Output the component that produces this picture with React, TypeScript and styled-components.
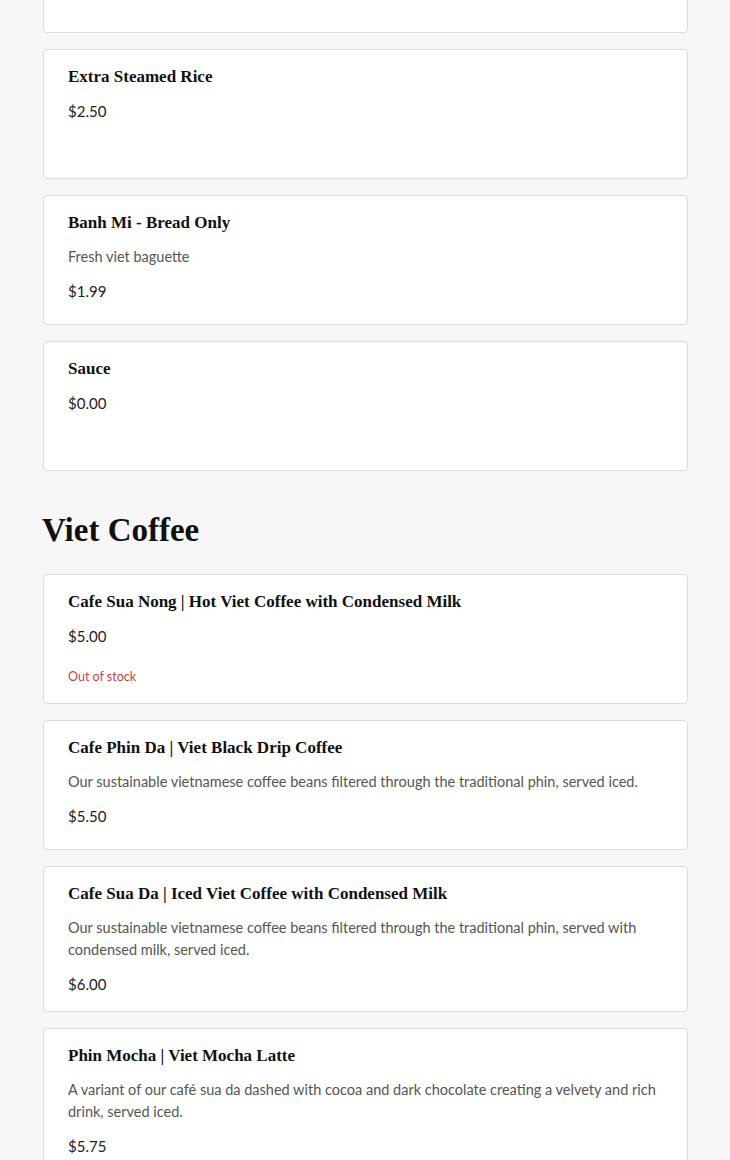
import React from "react";
import styled, { createGlobalStyle } from "styled-components";

const Global = createGlobalStyle`
  html, body { margin: 0; padding: 0; background: #f7f7f7; }
  body { font-family: Lato, "Open Sans", sans-serif; color: #222; overflow: hidden; }
`;

const Page = styled.main`
  padding: 0 42px 0 43px;
  margin-top: -97px;
`;

const Section = styled.section`
  display: flex;
  flex-direction: column;
`;

const SectionTitle = styled.h2`
  font-family: "Liberation Serif", "Times New Roman", serif;
  font-weight: 700;
  font-size: 33px;
  line-height: 40px;
  margin: 39px 0 24px -1px;
  color: #111;
`;

const List = styled.div`
  display: flex;
  flex-direction: column;
  gap: 16px;
`;

const Card = styled.article`
  box-sizing: border-box;
  min-height: 130px;
  background: #fff;
  border: 1px solid #dcdcdc;
  border-radius: 4px;
  padding: 16px 24px 16px;
  display: flex;
  flex-direction: column;
  gap: 12px;
`;

const Title = styled.h3`
  margin: 0;
  font-family: "Liberation Serif", "Times New Roman", serif;
  font-weight: 700;
  font-size: 17px;
  line-height: 22px;
  color: #111;
`;

const Desc = styled.p`
  margin: 0;
  font-size: 14.5px;
  line-height: 22px;
  color: #555;
`;

const Price = styled.div`
  font-size: 15px;
  line-height: 22px;
  color: #222;
`;

const Stock = styled.div`
  margin-top: 9px;
  font-size: 12.5px;
  line-height: 18px;
  color: #c8434b;
`;

type Item = { name: string; desc?: string; price: string; out?: boolean };

const extras: Item[] = [
  { name: "Extra Steamed Rice", price: "$2.50" },
  { name: "Banh Mi - Bread Only", desc: "Fresh viet baguette", price: "$1.99" },
  { name: "Sauce", price: "$0.00" },
];

const coffee: Item[] = [
  { name: "Cafe Sua Nong | Hot Viet Coffee with Condensed Milk", price: "$5.00", out: true },
  {
    name: "Cafe Phin Da | Viet Black Drip Coffee",
    desc: "Our sustainable vietnamese coffee beans filtered through the traditional phin, served iced.",
    price: "$5.50",
  },
  {
    name: "Cafe Sua Da | Iced Viet Coffee with Condensed Milk",
    desc: "Our sustainable vietnamese coffee beans filtered through the traditional phin, served with condensed milk, served iced.",
    price: "$6.00",
  },
  {
    name: "Phin Mocha | Viet Mocha Latte",
    desc: "A variant of our café sua da dashed with cocoa and dark chocolate creating a velvety and rich drink, served iced.",
    price: "$5.75",
  },
];

const MenuCard = ({ item }: { item: Item }) => (
  <Card>
    <Title>{item.name}</Title>
    {item.desc && <Desc>{item.desc}</Desc>}
    <Price>{item.price}</Price>
    {item.out && <Stock>Out of stock</Stock>}
  </Card>
);

export default function App() {
  return (
    <>
      <Global />
      <Page>
        <Section>
          <List>
            <Card aria-hidden="true" />
            {extras.map((i) => (
              <MenuCard key={i.name} item={i} />
            ))}
          </List>
        </Section>
        <Section>
          <SectionTitle>Viet Coffee</SectionTitle>
          <List>
            {coffee.map((i) => (
              <MenuCard key={i.name} item={i} />
            ))}
          </List>
        </Section>
      </Page>
    </>
  );
}
